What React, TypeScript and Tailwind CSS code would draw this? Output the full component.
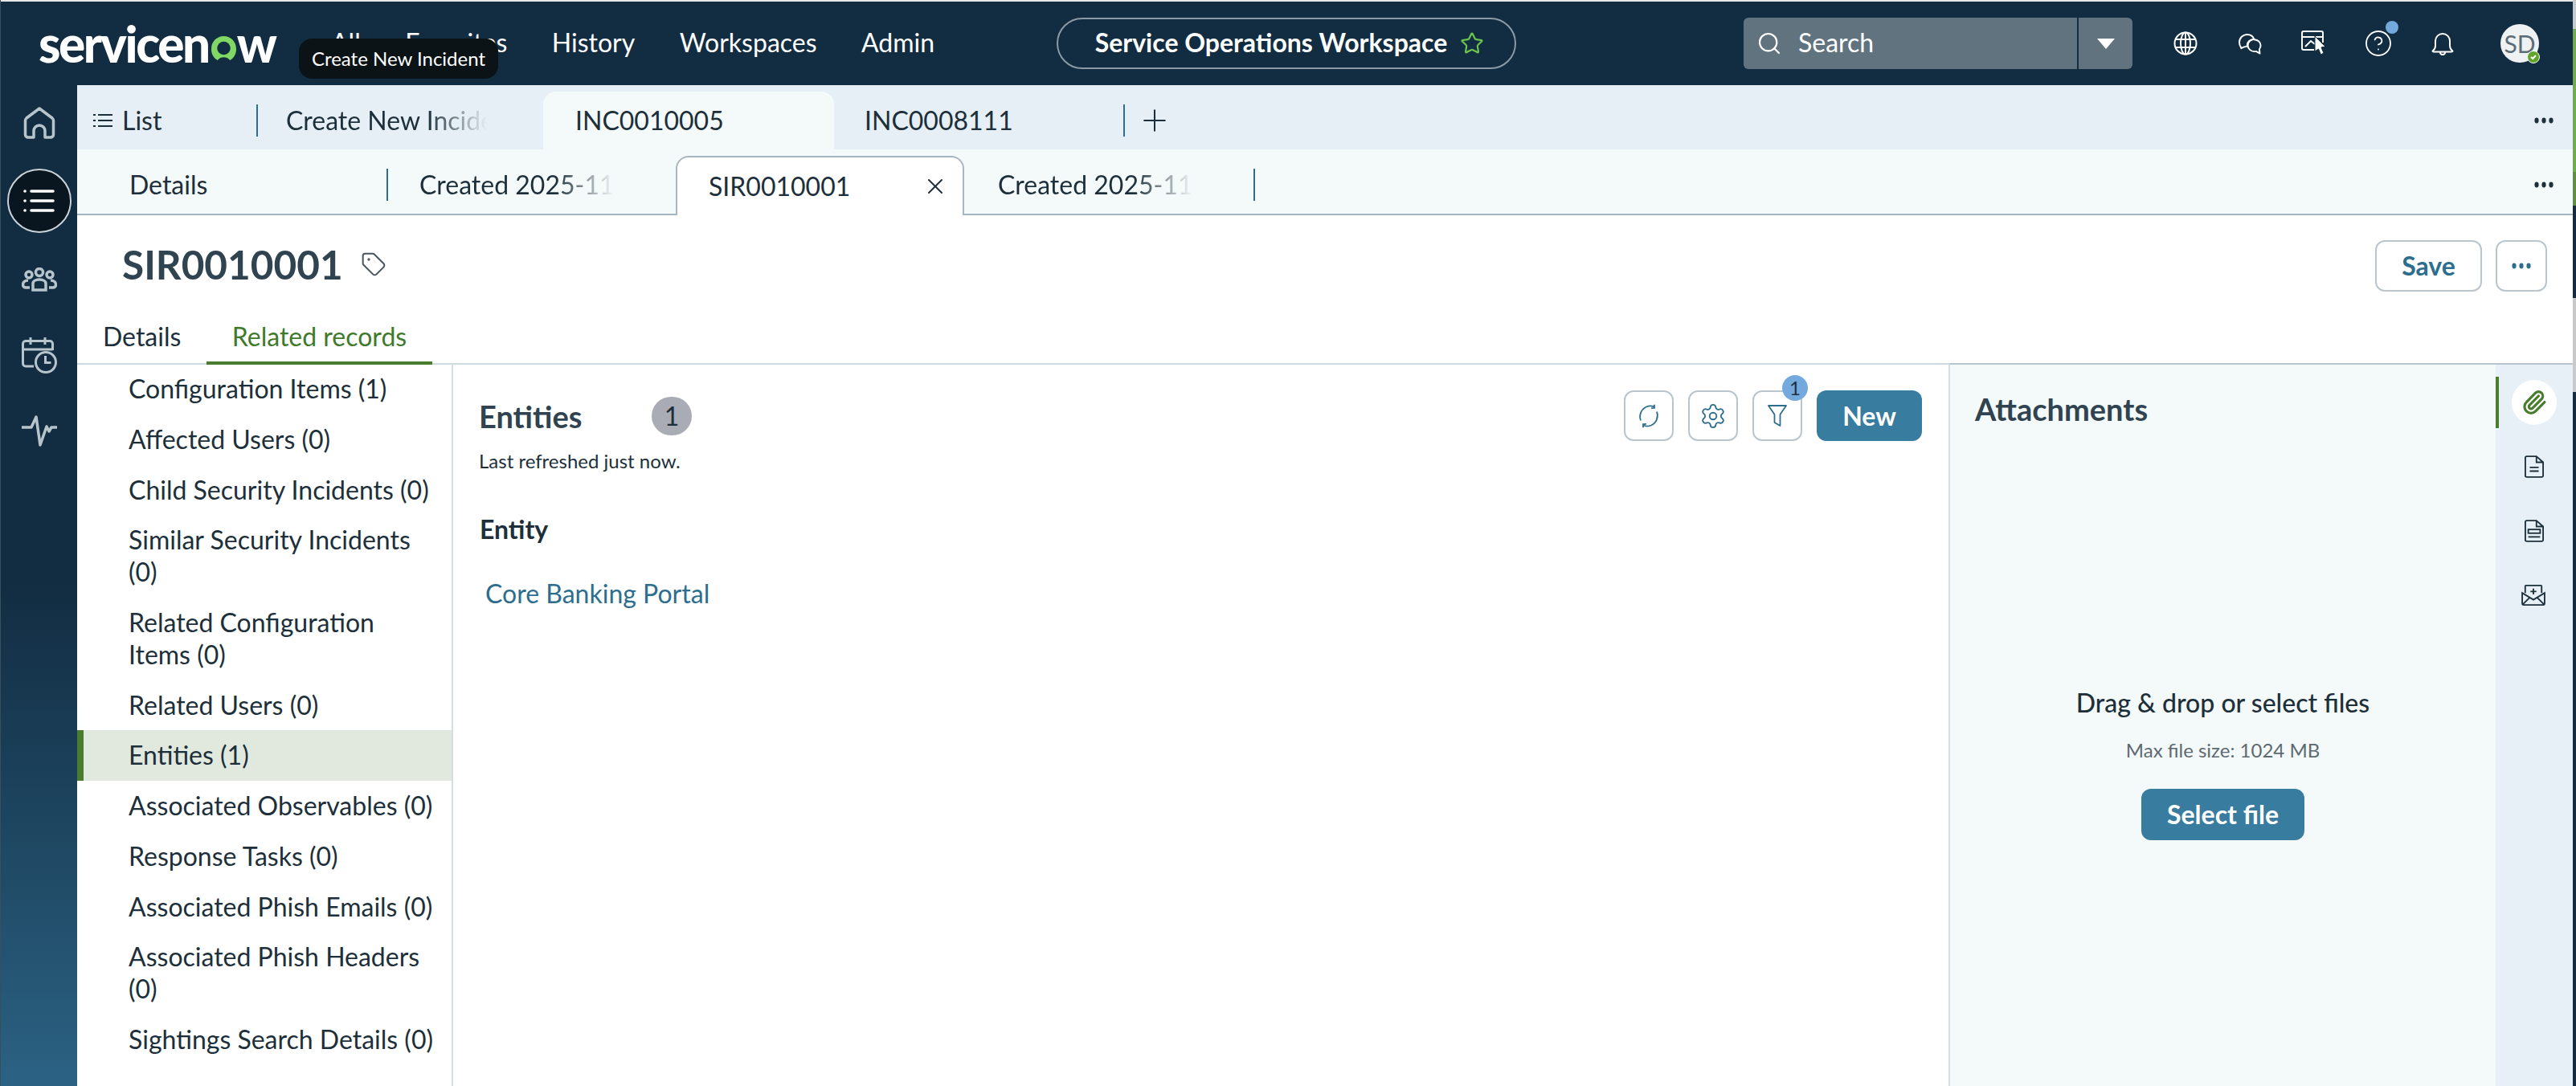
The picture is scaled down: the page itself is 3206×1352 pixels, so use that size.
import React from "react";
import { CircleHelp, Paperclip, Plus, Search, Settings, Star, Tag, X } from "lucide-react";

const relatedLists = [
  "Configuration Items (1)",
  "Affected Users (0)",
  "Child Security Incidents (0)",
  "Similar Security Incidents (0)",
  "Related Configuration Items (0)",
  "Related Users (0)",
  "Entities (1)",
  "Associated Observables (0)",
  "Response Tasks (0)",
  "Associated Phish Emails (0)",
  "Associated Phish Headers (0)",
  "Sightings Search Details (0)",
];

function Dots({ className }: { className: string }) {
  return (
    <svg width="24" height="8" viewBox="0 0 24 8" className={className} fill="currentColor">
      <ellipse cx="3" cy="4" rx="2.6" ry="3.4" />
      <ellipse cx="12" cy="4" rx="2.6" ry="3.4" />
      <ellipse cx="21" cy="4" rx="2.6" ry="3.4" />
    </svg>
  );
}

function Logo() {
  return (
    <div className="flex items-center h-[56px] text-[62px] leading-none font-black text-white tracking-[-2.4px] font-[Lato,sans-serif]">
      <span>servicen</span>
      <svg width="33" height="32" viewBox="0 0 34 33" className="mt-[12px] ml-[2px]">
        <path
          d="M9 32C3.500 29 1 23.500 1 17.500 1 8 8 1 17 1s16 7 16 16.500c0 6-2.500 11.500-8 14.500-2.500-3-5-4-8-4s-5.500 1-8 4z"
          fill="#81d763"
        />
        <circle cx="17" cy="16.500" r="8.500" fill="#122d42" />
      </svg>
      <span>w</span>
    </div>
  );
}

function Globe() {
  return (
    <svg width="30" height="30" viewBox="0 0 30 30" fill="none" stroke="white" strokeWidth="2">
      <circle cx="15" cy="15" r="13.500" />
      <ellipse cx="15" cy="15" rx="6" ry="13.500" />
      <path d="M15 1.500v27M2.500 10h25M2.500 20h25" />
    </svg>
  );
}

function Chat() {
  return (
    <svg width="29" height="27" viewBox="0 0 30 28" fill="none" stroke="white" strokeWidth="2" strokeLinejoin="round">
      <path d="M3 18.500C1.500 16.500 1 14.500 1 12 1 6.500 5.500 2 11 2c4.500 0 8 2.500 9 6.500-5-.5-9 3-9 7.500 0 .5 0 1 .1 1.500-2.500 0-4.500.5-6.100 1.500L3.500 20z" />
      <path d="M20.500 8.500c4.500.5 8 3.500 8 7.500 0 2-.7 3.800-1.700 5l.7 5.500-4.800-2.800c-.7.2-1.500.3-2.200.3-4.700 0-8.500-3.500-8.500-8 0-4.400 3.800-8 8.500-8z" />
    </svg>
  );
}

function Kiosk() {
  return (
    <svg width="32" height="32" viewBox="0 0 32 32" fill="none">
      <path d="M16 24H3a2 2 0 0 1-2-2V3a2 2 0 0 1 2-2h22a2 2 0 0 1 2 2v12M1 8h26" stroke="white" strokeWidth="2" />
      <path d="M5 20l7-7 5 4" stroke="white" strokeWidth="2" />
      <path d="M17 7l13 13-5 1 3 7-3.500 2-3-7-4.500 3z" fill="white" stroke="#122d42" />
    </svg>
  );
}

function BellIcon() {
  return (
    <svg width="28" height="30" viewBox="0 0 28 30" fill="none" stroke="white" strokeWidth="2" strokeLinejoin="round">
      <path d="M2 24c2-1.500 3-3.500 3-6v-6a9 9 0 0 1 18 0v6c0 2.500 1 4.500 3 6 .8.600.4 1.500-.6 1.500H2.600c-1 0-1.400-.9-.6-1.500z" />
      <path d="M11 26c0 4 6 4 6 0" />
    </svg>
  );
}

function Refresh() {
  return (
    <svg width="30" height="30" viewBox="0 0 30 30" fill="none" stroke="#2d6e8e" strokeWidth="1.800">
      <path d="M5 20.500C2.500 14 5.500 6.500 12 3.500c3.500-1.500 7-1.300 10 .3" />
      <path d="M25 9.500c2.500 6.500-.5 14-7 17-3.500 1.500-7 1.300-10-.3" />
      <path d="M22 .8v4l-4 .3M8 29.200v-4l4-.3" />
    </svg>
  );
}

function FilterIcon() {
  return (
    <svg width="24" height="27" viewBox="0 0 24 27" fill="none" stroke="#2d6e8e" strokeWidth="1.800" strokeLinejoin="round">
      <path d="M1 1h22l-7.500 11v14l-7-4V12z" />
    </svg>
  );
}

function IconButton({ children }: { children: React.ReactNode }) {
  return (
    <div className="flex items-center justify-center w-[62px] h-[63px] rounded-[12px] border-2 border-[#b9c6cd] bg-white">
      {children}
    </div>
  );
}

function Tab({ label, width, fade }: { label: string; width: string; fade?: boolean }) {
  return (
    <span
      className={
        width +
        " block overflow-hidden whitespace-nowrap " +
        (fade ? "[mask-image:linear-gradient(to_right,black_70%,transparent_100%)]" : "")
      }
    >
      {label}
    </span>
  );
}

function Divider() {
  return <span className="block w-[2px] h-[40px] bg-[#2d6e8e] shrink-0" />;
}

function Header() {
  return (
    <div className="relative flex items-center h-[104px] bg-[#122d42] text-white text-[32px] shrink-0">
      <div className="ml-[47px] w-[296px] shrink-0">
        <Logo />
      </div>
      <nav className="ml-[68px] w-[903px] flex gap-[55.500px] pb-[2px] shrink-0">
        <span>All</span>
        <span>Favorites</span>
        <span>History</span>
        <span>Workspaces</span>
        <span>Admin</span>
      </nav>
      <div className="flex items-center justify-center gap-[16px] w-[572px] h-[64px] pl-[8px] rounded-full border-2 border-[#8b9ba6] font-bold shrink-0">
        <span className="pb-[2px]">Service Operations Workspace</span>
        <Star size={30} color="#6cc24a" strokeWidth={1.8} />
      </div>
      <div className="ml-[283px] flex w-[484px] h-[64px] rounded-[6px] bg-[#61737f] shrink-0">
        <div className="flex items-center w-[415px] pl-[16px] gap-[20px]">
          <Search size={32} strokeWidth={1.6} />
          <span className="pb-[2px]">Search</span>
        </div>
        <div className="w-[2px] bg-[#122d42]" />
        <div className="flex-1 flex items-center justify-center">
          <svg width="22" height="13" viewBox="0 0 22 13">
            <path d="M0 0h22L11 13z" fill="white" />
          </svg>
        </div>
      </div>
      <div className="ml-[26px] flex items-center">
        <div className="flex justify-center w-[80px]"><Globe /></div>
        <div className="flex justify-center w-[80px]"><Chat /></div>
        <div className="flex justify-center w-[80px]"><Kiosk /></div>
        <div className="relative flex justify-center w-[80px]">
          <CircleHelp size={36} strokeWidth={1.2} />
          <span className="absolute left-[49px] -top-[10px] w-[16px] h-[16px] rounded-full bg-[#73a9dd]" />
        </div>
        <div className="flex justify-center w-[80px]"><BellIcon /></div>
      </div>
      <div className="relative ml-[32px] flex items-center justify-center w-[48px] h-[48px] rounded-full bg-[#eef2f3] text-[#5d6d78] text-[30px]">
        SD
        <span className="absolute -right-[1px] -bottom-[1px] flex items-center justify-center w-[16px] h-[16px] rounded-full bg-[#62a329] border border-white">
          <svg width="10" height="10" viewBox="0 0 10 10" fill="none" stroke="white" strokeWidth="2">
            <path d="M2 5l2.200 2L8 3" />
          </svg>
        </span>
      </div>
      <div className="absolute left-[371px] top-[46px] flex items-center justify-center w-[248px] h-[50px] rounded-[16px] bg-[#0c1317] text-[24px]">
        Create New Incident
      </div>
    </div>
  );
}

function Rail() {
  return (
    <aside className="flex flex-col items-center w-[95px] shrink-0 bg-linear-to-b from-[#122d42] from-[50%] to-[#2b6283] text-[#b7c4cb]">
      <svg width="40" height="40" viewBox="0 0 40 40" fill="none" stroke="currentColor" strokeWidth="3.500" strokeLinejoin="round" className="mt-[27px]">
        <path d="M13 38H6a3.500 3.500 0 0 1-3.500-3.500V17a4 4 0 0 1 1.500-3L20 2l16 12a4 4 0 0 1 1.500 3v17.500A3.500 3.500 0 0 1 34 38h-7v-8a7 7 0 0 0-14 0z" />
      </svg>
      <div className="mt-[37px] flex items-center justify-center w-[80px] h-[80px] rounded-full bg-[#0a161f] border-2 border-[#c9d2d7]">
        <svg width="40" height="30" viewBox="0 0 40 30" fill="none" stroke="white" strokeWidth="3.600" strokeLinecap="round">
          <path d="M10 3h27M10 15h27M10 27h27" />
          <path d="M2 3h.1M2 15h.1M2 27h.1" />
        </svg>
      </div>
      <svg width="44" height="30" viewBox="0 0 44 30" fill="none" stroke="currentColor" strokeWidth="3.500" className="mt-[43px]">
        <circle cx="22" cy="6" r="4.500" />
        <circle cx="9" cy="9" r="4" />
        <circle cx="35" cy="9" r="4" />
        <path d="M14 28v-8c0-3 3.500-5 8-5s8 2 8 5v8z" />
        <path d="M10 25H5c-2 0-3.500-1.500-3.500-3.500S3 16 8 16M34 25h5c2 0 3.500-1.500 3.500-3.500S41 16 36 16" />
      </svg>
      <svg width="44" height="46" viewBox="0 0 44 46" fill="none" stroke="currentColor" strokeWidth="3" className="mt-[56px]">
        <path d="M15 37H5a3.500 3.500 0 0 1-3.500-3.500V9A3.500 3.500 0 0 1 5 5.500h30A3.500 3.500 0 0 1 38.500 9v8M1.500 16h37M11 1v9M29 1v9" />
        <circle cx="30" cy="32" r="12.500" />
        <path d="M29.500 24v8.500h7" />
      </svg>
      <svg width="44" height="40" viewBox="0 0 44 40" fill="none" stroke="currentColor" strokeWidth="3.500" strokeLinejoin="round" className="mt-[52px]">
        <path d="M0 15h12L18 2l5 35 8-23 3 6 3-5h7" />
      </svg>
    </aside>
  );
}

function RelatedList() {
  return (
    <div className="w-[468px] shrink-0 -mt-[1px] border-r-2 border-[#d5dee3]">
      {relatedLists.map((item) =>
        item === "Entities (1)" ? (
          <div key={item} className="py-[11.350px] pl-[56px] pr-[16px] border-l-8 border-[#4a7c30] bg-[#e1e9de]">
            {item}
          </div>
        ) : (
          <div key={item} className="py-[11.350px] pl-[64px] pr-[16px]">
            {item}
          </div>
        )
      )}
    </div>
  );
}

function Entities() {
  return (
    <div className="w-[1861px] shrink-0 pl-[32px] pr-[33px] pt-[32px]">
      <div className="flex justify-between items-start">
        <div className="pt-[8px]">
          <div className="flex items-center">
            <h2 className="w-[215px] text-[38px] leading-[48px] font-bold text-[#2f4450]">Entities</h2>
            <span className="flex items-center justify-center w-[50px] h-[48px] rounded-full bg-[#a9abb5]">1</span>
          </div>
          <p className="mt-[16px] text-[24px] leading-[32px]">Last refreshed just now.</p>
        </div>
        <div className="flex items-center gap-[18px]">
          <IconButton><Refresh /></IconButton>
          <IconButton><Settings size={34} color="#2d6e8e" strokeWidth={1.3} /></IconButton>
          <div className="relative">
            <IconButton><FilterIcon /></IconButton>
            <span className="absolute -right-[7px] -top-[19px] flex items-center justify-center w-[32px] h-[32px] rounded-full bg-[#73a9dd] text-[24px]">1</span>
          </div>
          <button className="w-[131px] h-[63px] rounded-[12px] bg-[#387c9f] text-white font-bold">New</button>
        </div>
      </div>
      <div className="mt-[49px] pl-[1px] font-bold">Entity</div>
      <div className="mt-[40px] pl-[8px] text-[#2d6e8e]">Core Banking Portal</div>
    </div>
  );
}

function Attachments() {
  return (
    <div className="flex-1 flex flex-col -mt-[2px] border-t-2 border-l-2 border-t-[#b8c5cc] border-l-[#d5dee3] bg-[#f4f9f9]">
      <h2 className="pl-[31px] pt-[31px] text-[38px] leading-[48px] font-bold text-[#2f4450]">Attachments</h2>
      <div className="mt-[322px] flex flex-col items-center">
        <div className="font-medium">Drag &amp; drop or select files</div>
        <div className="mt-[23px] text-[24px] leading-[32px] text-[#5d6a72]">Max file size: 1024 MB</div>
        <button className="mt-[32px] w-[203px] h-[64px] rounded-[12px] bg-[#387c9f] text-white font-bold">Select file</button>
      </div>
    </div>
  );
}

function SideTools() {
  return (
    <div className="w-[96px] shrink-0 -mt-[2px] border-t-2 border-[#b8c5cc] bg-[#e7f0f6] pt-[7px]">
      <div className="relative flex items-center justify-center h-[80px]">
        <span className="absolute left-0 top-[8px] w-[4px] h-[64px] bg-[#4a7c30]" />
        <span className="flex items-center justify-center w-[56px] h-[56px] rounded-full bg-white">
          <Paperclip size={32} color="#4a7c30" strokeWidth={2.4} />
        </span>
      </div>
      <div className="flex items-center justify-center h-[80px]">
        <svg width="24" height="28" viewBox="0 0 26 30" fill="none" stroke="#1c2f3a" strokeWidth="2">
          <path d="M16 1H3a2 2 0 0 0-2 2v24a2 2 0 0 0 2 2h20a2 2 0 0 0 2-2V9zM16 1v8h9" />
          <path d="M7 16h12M7 21h12" />
        </svg>
      </div>
      <div className="flex items-center justify-center h-[80px]">
        <svg width="24" height="28" viewBox="0 0 26 30" fill="none" stroke="#1c2f3a" strokeWidth="2">
          <path d="M16 1H3a2 2 0 0 0-2 2v24a2 2 0 0 0 2 2h20a2 2 0 0 0 2-2V9zM16 1v8h9" />
          <rect x="5" y="13" width="16" height="5" />
          <path d="M5 23h16" />
        </svg>
      </div>
      <div className="flex items-center justify-center h-[80px] pr-[2px]">
        <svg width="30" height="26" viewBox="0 0 32 28" fill="none" stroke="#1c2f3a" strokeWidth="2">
          <path d="M5 11V2a1 1 0 0 1 1-1h20a1 1 0 0 1 1 1v9" />
          <path d="M1 11v14a2 2 0 0 0 2 2h26a2 2 0 0 0 2-2V11l-15 9zM1 27l10-10M31 27L21 17" />
          <path d="M16 5v8M12 9h8" />
        </svg>
      </div>
    </div>
  );
}

export default function App() {
  return (
    <div className="flex w-[3206px] h-[1352px] overflow-hidden bg-white text-[32px] leading-[40px] text-[#1c2f3a] font-[Lato,sans-serif]">
      <div className="flex flex-col w-[3202px] shrink-0 border-l border-[#3a4f5d]">
        <div className="h-[2px] bg-[#e8e8e8] shrink-0" />
        <Header />
        <div className="flex flex-1 min-h-0">
          <Rail />
          <main className="flex flex-col flex-1 min-w-0">
            {/* workspace tabs */}
            <div className="flex items-center h-[80px] pt-[8px] shrink-0 bg-[#e7eff6]">
              <div className="flex items-center justify-between w-[225px] pl-[20px]">
                <div className="flex items-center gap-[12px]">
                  <svg width="24" height="18" viewBox="0 0 24 18" fill="none" stroke="#1c2f3a" strokeWidth="2">
                    <path d="M6 2h18M6 9h18M6 16h18M0 2h3M0 9h3M0 16h3" />
                  </svg>
                  <span>List</span>
                </div>
                <Divider />
              </div>
              <div className="w-[355px] pl-[35px]">
                <Tab label="Create New Incident" width="w-[250px]" fade />
              </div>
              <div className="flex items-center self-end w-[362px] h-[72px] pl-[40px] rounded-t-[16px] bg-[#f4f9f9]">INC0010005</div>
              <div className="flex items-center justify-between w-[362px] pl-[38px]">
                <span>INC0008111</span>
                <Divider />
              </div>
              <Plus size={44} strokeWidth={1.1} className="ml-[15px]" />
              <Dots className="ml-auto mr-[24px] text-[#1c2f3a]" />
            </div>
            {/* record sub tabs */}
            <div className="flex items-center h-[82px] pt-[8px] shrink-0 border-b-2 border-[#a8b6c0] bg-[#f4f9f9]">
              <div className="flex items-center justify-between w-[387px] pl-[65px]">
                <span>Details</span>
                <Divider />
              </div>
              <div className="w-[358px] pl-[39px]">
                <Tab label="Created 2025-11" width="w-[242px]" fade />
              </div>
              <div className="flex items-center justify-between self-end w-[359px] h-[74px] -mb-[2px] pl-[39px] pr-[18px] rounded-t-[16px] border-2 border-b-0 border-[#a8b6c0] bg-white">
                <span>SIR0010001</span>
                <X size={32} strokeWidth={1.5} />
              </div>
              <div className="flex items-center justify-between w-[362px] pl-[42px]">
                <Tab label="Created 2025-11" width="w-[242px]" fade />
                <Divider />
              </div>
              <Dots className="ml-auto mr-[24px] text-[#1c2f3a]" />
            </div>
            {/* record title */}
            <div className="flex items-center h-[122px] shrink-0 pl-[56px] pr-[32px]">
              <h1 className="text-[49.500px] leading-[60px] font-bold text-[#2f4450]">SIR0010001</h1>
              <Tag size={32} color="#46555f" strokeWidth={1.5} className="ml-[22px]" />
              <button className="ml-auto mt-[4px] w-[133px] h-[64px] rounded-[12px] border-2 border-[#b9c6cd] text-[#2d6e8e] font-bold">Save</button>
              <button className="ml-[17px] mt-[4px] flex items-center justify-center w-[64px] h-[64px] rounded-[12px] border-2 border-[#b9c6cd] text-[#2d6e8e]">
                <Dots className="" />
              </button>
            </div>
            {/* form tabs */}
            <div className="flex items-stretch h-[64px] shrink-0 border-b-2 border-[#cfd9de]">
              <span className="ml-[32px] w-[129px] leading-[58px]">Details</span>
              <span className="w-[281px] h-[64px] border-b-4 border-[#4a7c30] text-center text-[#3f7a2c] leading-[58px]">Related records</span>
            </div>
            <div className="flex flex-1 min-h-0">
              <RelatedList />
              <Entities />
              <Attachments />
              <SideTools />
            </div>
          </main>
        </div>
      </div>
      <div className="flex flex-col w-[4px] shrink-0">
        <div className="h-[36px] bg-[#c9c9c9]" />
        <div className="h-[178px] bg-[#6fab52]" />
        <div className="h-[42px] bg-[#5e9148]" />
        <div className="h-[115px] bg-[#122d42]" />
        <div className="h-[117px] bg-[#c9c9c9]" />
        <div className="flex-1 bg-[#122d42]" />
      </div>
    </div>
  );
}
